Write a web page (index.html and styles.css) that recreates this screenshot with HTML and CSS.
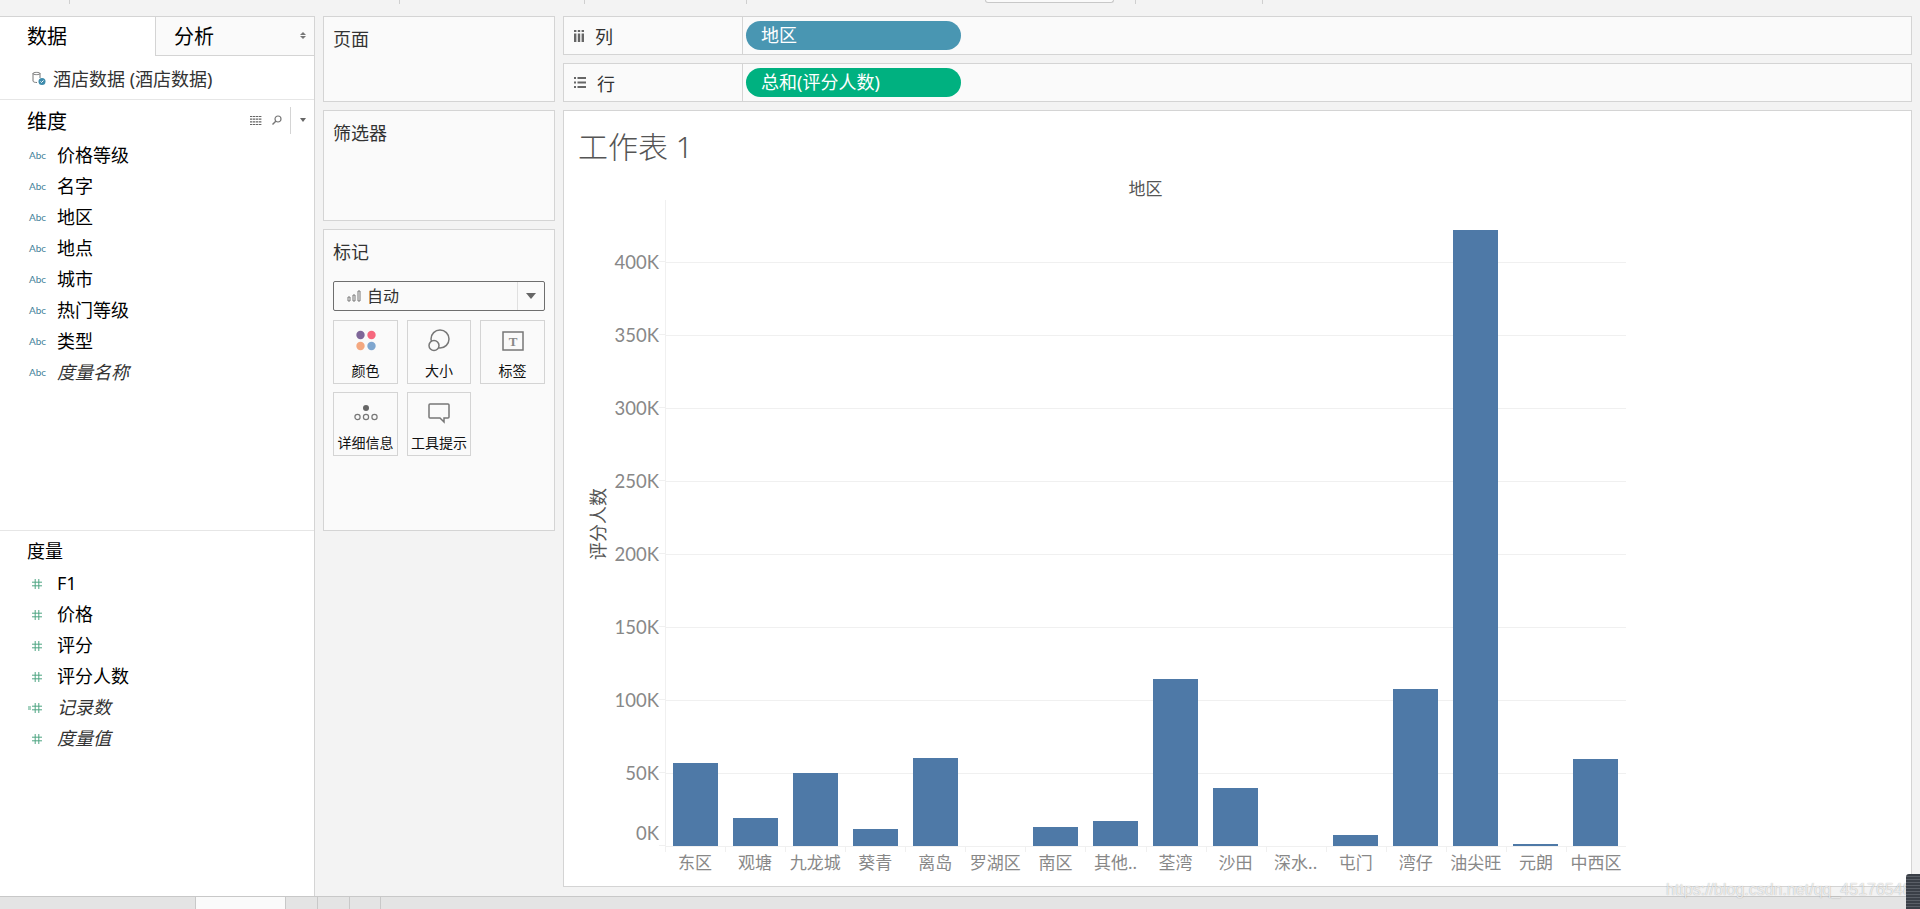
FILE: index.html
```html
<!DOCTYPE html>
<html lang="zh-CN">
	<head>
		<meta charset="UTF-8" />
		<title>工作表 1</title>
		<link rel="stylesheet" href="styles.css">
	</head>
	<body>
		<!-- bord bas de la barre d'outils -->
		<div class="toolbar">
			<span class="tool t1"></span>
			<span class="tool t2"></span>
			<span class="tool t3"></span>
			<span class="tool t4"></span>
			<span class="tool-gap"></span>
			<span class="tool-btn"></span>
			<span class="tool t5"></span>
			<span class="tool t6"></span>
		</div>

		<div class="workspace">
			<aside class="sidebar">
				<div class="tabs">
					<div class="tab tab-active">数据</div>
					<div class="tab tab-other">分析
						<span class="sort-arrows"><i class="arrow-up"></i><i class="arrow-down"></i></span>
					</div>
				</div>
				<div class="datasource">
					<svg class="db-icon" viewBox="0 0 14 14" width="14" height="14">
						<path d="M1 2.5C1 1 8 1 8 2.5V7M1 2.5C1 4 8 4 8 2.5M1 2.5V10C1 11 3 11.5 5 11.5" fill="none" stroke="#777" stroke-width="1" />
						<circle cx="10" cy="10.5" r="3.5" fill="#3f8cad" />
						<path d="M8.5 10.5l1 1 2-2" fill="none" stroke="#fff" stroke-width="1" />
					</svg>
					<span>酒店数据 (酒店数据)</span>
				</div>

				<section class="dimensions">
					<div class="section-head">
						<span>维度</span>
						<div class="section-tools">
							<svg viewBox="0 0 12 9" width="12" height="9">
								<path d="M0 .5h12M0 3.2h12M0 5.8h12M0 8.5h12" stroke="#666" stroke-width="1.2" stroke-dasharray="2.4 .6" />
							</svg>
							<svg class="search-icon" viewBox="0 0 10 10" width="10" height="10">
								<circle cx="6" cy="4" r="3" fill="none" stroke="#777" stroke-width="1.2" />
								<path d="M4 6L0.5 9.5" stroke="#777" stroke-width="1.4" />
							</svg>
							<i class="tools-sep"></i>
							<i class="caret caret-small"></i>
						</div>
					</div>
					<div class="field"><span class="abc">Abc</span>价格等级</div>
					<div class="field"><span class="abc">Abc</span>名字</div>
					<div class="field"><span class="abc">Abc</span>地区</div>
					<div class="field"><span class="abc">Abc</span>地点</div>
					<div class="field"><span class="abc">Abc</span>城市</div>
					<div class="field"><span class="abc">Abc</span>热门等级</div>
					<div class="field"><span class="abc">Abc</span>类型</div>
					<div class="field field-calc"><span class="abc">Abc</span>度量名称</div>
				</section>

				<section class="measures">
					<div class="section-head section-head-small"><span>度量</span></div>
					<div class="field"><svg class="hash" viewBox="0 0 14 10" width="14" height="10"><path d="M4 3.2h10M4 6.8h10M7.2 0v10M10.8 0v10" /></svg>F1</div>
					<div class="field"><svg class="hash" viewBox="0 0 14 10" width="14" height="10"><path d="M4 3.2h10M4 6.8h10M7.2 0v10M10.8 0v10" /></svg>价格</div>
					<div class="field"><svg class="hash" viewBox="0 0 14 10" width="14" height="10"><path d="M4 3.2h10M4 6.8h10M7.2 0v10M10.8 0v10" /></svg>评分</div>
					<div class="field"><svg class="hash" viewBox="0 0 14 10" width="14" height="10"><path d="M4 3.2h10M4 6.8h10M7.2 0v10M10.8 0v10" /></svg>评分人数</div>
					<div class="field field-calc"><svg class="hash" viewBox="0 0 14 10" width="14" height="10"><path d="M4 3.2h10M4 6.8h10M7.2 0v10M10.8 0v10M0 4h3M0 6h3" /></svg>记录数</div>
					<div class="field field-calc"><svg class="hash" viewBox="0 0 14 10" width="14" height="10"><path d="M4 3.2h10M4 6.8h10M7.2 0v10M10.8 0v10" /></svg>度量值</div>
				</section>
			</aside>

			<main class="main">
				<div class="card pages">页面</div>

				<div class="shelves">
					<div class="shelf">
						<div class="shelf-label">
							<svg viewBox="0 0 10 12" width="10" height="12" fill="#666">
								<path d="M0 0h2.4v2H0zM3.8 0h2.4v2H3.8zM7.6 0H10v2H7.6zM0 3.5h2.4V12H0zM3.8 3.5h2.4V12H3.8zM7.6 3.5H10V12H7.6z" />
							</svg>
							<span>列</span>
						</div>
						<div class="pill pill-blue">地区</div>
					</div>
					<div class="shelf">
						<div class="shelf-label">
							<svg viewBox="0 0 12 11" width="12" height="11" fill="#666">
								<path d="M0 0h2v2H0zM3.5 0H12v2H3.5zM0 4.5h2v2H0zM3.5 4.5H12v2H3.5zM0 9h2v2H0zM3.5 9H12v2H3.5z" />
							</svg>
							<span>行</span>
						</div>
						<div class="pill pill-green">总和(评分人数)</div>
					</div>
				</div>

				<div class="left-col">
					<div class="card filters">筛选器</div>
					<div class="card marks">
						<div>标记</div>
						<div class="mark-select">
							<svg viewBox="0 0 14 12" width="14" height="12">
								<path d="M1 7h2v4H1zM6 5h2v6H6zM11 1h2v10h-2z" fill="none" stroke="#777" stroke-width="1" />
							</svg>
							<span class="mark-select-text">自动</span>
							<span class="mark-select-btn"><i class="caret"></i></span>
						</div>
						<div class="mark-grid">
							<div class="mark-card">
								<svg viewBox="0 0 24 24" width="24" height="24">
									<circle cx="6.5" cy="6" r="4.2" fill="#7f6799" />
									<circle cx="17.5" cy="6" r="4.2" fill="#f6687e" />
									<circle cx="6.5" cy="17" r="4.2" fill="#f4a880" />
									<circle cx="17.5" cy="17" r="4.2" fill="#7fa6cf" />
								</svg>
								<span>颜色</span>
							</div>
							<div class="mark-card">
								<svg viewBox="0 0 24 24" width="24" height="24" fill="#fafafa" stroke="#777" stroke-width="1.5">
									<circle cx="13" cy="10" r="9" />
									<circle cx="7" cy="16.5" r="5" />
								</svg>
								<span>大小</span>
							</div>
							<div class="mark-card">
								<svg viewBox="0 0 24 24" width="24" height="24">
									<rect x="2" y="3" width="20" height="18" fill="none" stroke="#777" stroke-width="1.5" />
									<text x="12" y="16.5" class="t-glyph">T</text>
								</svg>
								<span>标签</span>
							</div>
							<div class="mark-card">
								<svg viewBox="0 0 24 24" width="24" height="24" fill="none" stroke="#777" stroke-width="1.2">
									<circle cx="12" cy="7" r="3" fill="#666" stroke="none" />
									<circle cx="3.5" cy="16" r="2.6" />
									<circle cx="12" cy="16" r="2.6" />
									<circle cx="20.5" cy="16" r="2.6" />
								</svg>
								<span>详细信息</span>
							</div>
							<div class="mark-card">
								<svg viewBox="0 0 24 24" width="24" height="24">
									<path d="M3 3h18a1 1 0 0 1 1 1v12a1 1 0 0 1-1 1h-4v4l-4-4H3a1 1 0 0 1-1-1V4a1 1 0 0 1 1-1z" fill="none" stroke="#777" stroke-width="1.5" />
								</svg>
								<span>工具提示</span>
							</div>
						</div>
					</div>
				</div>

				<div class="view">
					<h1 class="view-title">工作表 1</h1>
					<div class="chart">
						<div class="y-title"><span>评分人数</span></div>
						<div class="y-axis">
							<div class="y-label"><span>0K</span></div>
							<div class="y-label"><span>50K</span></div>
							<div class="y-label"><span>100K</span></div>
							<div class="y-label"><span>150K</span></div>
							<div class="y-label"><span>200K</span></div>
							<div class="y-label"><span>250K</span></div>
							<div class="y-label"><span>300K</span></div>
							<div class="y-label"><span>350K</span></div>
							<div class="y-label"><span>400K</span></div>
						</div>
						<div class="plot-col">
							<div class="x-title">地区</div>
							<div class="plot">
								<div class="band"><div class="bar" style="height:83px"></div></div>
								<div class="band"><div class="bar" style="height:28px"></div></div>
								<div class="band"><div class="bar" style="height:73px"></div></div>
								<div class="band"><div class="bar" style="height:17px"></div></div>
								<div class="band"><div class="bar" style="height:88px"></div></div>
								<div class="band"><div class="bar" style="height:0"></div></div>
								<div class="band"><div class="bar" style="height:19px"></div></div>
								<div class="band"><div class="bar" style="height:25px"></div></div>
								<div class="band"><div class="bar" style="height:167px"></div></div>
								<div class="band"><div class="bar" style="height:58px"></div></div>
								<div class="band"><div class="bar" style="height:0"></div></div>
								<div class="band"><div class="bar" style="height:11px"></div></div>
								<div class="band"><div class="bar" style="height:157px"></div></div>
								<div class="band"><div class="bar" style="height:616px"></div></div>
								<div class="band"><div class="bar" style="height:2px"></div></div>
								<div class="band"><div class="bar" style="height:87px"></div></div>
							</div>
							<div class="x-labels">
								<span>东区</span>
								<span>观塘</span>
								<span>九龙城</span>
								<span>葵青</span>
								<span>离岛</span>
								<span>罗湖区</span>
								<span>南区</span>
								<span>其他..</span>
								<span>荃湾</span>
								<span>沙田</span>
								<span>深水..</span>
								<span>屯门</span>
								<span>湾仔</span>
								<span>油尖旺</span>
								<span>元朗</span>
								<span>中西区</span>
							</div>
						</div>
					</div>
				</div>
			</main>
		</div>

		<!-- onglets du bas -->
		<div class="sheet-bar">
			<span class="sheet-spacer"></span>
			<span class="sheet sheet-active"></span>
			<span class="sheet"></span>
			<span class="sheet"></span>
			<span class="sheet"></span>
		</div>

		<div class="watermark">https://blog.csdn.net/qq_45176548</div>
		<div class="corner-handle"></div>
	</body>
</html>
```

FILE: styles.css
```css
* {
	box-sizing: border-box;
}

body {
	margin: 0;
	height: 909px;
	overflow: hidden;
	display: flex;
	flex-direction: column;
	position: relative;
	background: #f3f3f3;
	color: #000;
	font-family: "Noto Sans", "Noto Sans CJK SC", sans-serif;
	font-size: 18px;
}

/*TOOLBAR*/
.toolbar {
	height: 16px;
	display: flex;
	align-items: flex-start;
	flex: none;
}

.tool {
	height: 4px;
	border-right: 1px solid #cfcfcf;
}

.t1 { width: 70px; }
.t2 { width: 330px; }
.t3 { width: 185px; }
.t4 { width: 162px; }
.t5 { width: 22px; }
.t6 { width: 127px; }

.tool-gap {
	width: 238px;
}

.tool-btn {
	width: 129px;
	height: 3px;
	background: #fafafa;
	border: 1px solid #c8c8c8;
	border-top: none;
	border-radius: 0 0 3px 3px;
}

.workspace {
	flex: 1;
	display: flex;
	min-height: 0;
}

/*SIDEBAR*/
.sidebar {
	width: 315px;
	flex: none;
	background: #fff;
	border-top: 1px solid #d4d4d4;
	border-right: 1px solid #d4d4d4;
	display: flex;
	flex-direction: column;
}

.tabs {
	height: 39px;
	flex: none;
	display: flex;
	font-size: 20px;
	line-height: 40px;
}

.tab-active {
	width: 155px;
	padding-left: 27px;
}

.tab-other {
	flex: 1;
	padding-left: 18px;
	background: #fafafa;
	border-left: 1px solid #d4d4d4;
	border-bottom: 1px solid #d4d4d4;
	position: relative;
}

.sort-arrows {
	position: absolute;
	right: 8px;
	top: 15px;
	display: flex;
	flex-direction: column;
	gap: 1px;
}

.arrow-up,
.arrow-down {
	display: block;
	border-left: 3px solid transparent;
	border-right: 3px solid transparent;
}

.arrow-up {
	border-bottom: 3px solid #777;
}

.arrow-down {
	border-top: 3px solid #777;
}

.datasource {
	height: 44px;
	flex: none;
	display: flex;
	align-items: center;
	padding-left: 32px;
	color: #333;
	border-bottom: 1px solid #e6e6e6;
}

.db-icon {
	margin-right: 7px;
}

.dimensions {
	height: 431px;
	flex: none;
	border-bottom: 1px solid #e6e6e6;
}

.section-head {
	height: 40px;
	display: flex;
	align-items: center;
	justify-content: space-between;
	padding-left: 27px;
	font-size: 20px;
}

.section-head-small {
	height: 37px;
	font-size: 18px;
}

.section-tools {
	display: flex;
	align-items: center;
	margin-right: 8px;
}

.search-icon {
	margin-left: 10px;
}

.tools-sep {
	width: 1px;
	height: 27px;
	margin: 0 9px 0 8px;
	background: #d4d4d4;
}

.caret {
	display: block;
	border-left: 5px solid transparent;
	border-right: 5px solid transparent;
	border-top: 6px solid #666;
}

.caret-small {
	border-left-width: 3.5px;
	border-right-width: 3.5px;
	border-top-width: 4px;
}

.field {
	height: 31px;
	display: flex;
	align-items: center;
	line-height: 31px;
	white-space: nowrap;
}

.field-calc {
	font-style: italic;
	color: #333;
}

.abc {
	width: 57px;
	padding-left: 29px;
	flex: none;
	font-family: Lato, sans-serif;
	font-style: normal;
	font-size: 10px;
	color: #3f7f99;
}

.hash {
	margin-left: 28px;
	margin-right: 15px;
	flex: none;
	fill: none;
	stroke: #4fa683;
	stroke-width: 1;
}

/*PANNEAUX CENTRE*/
.main {
	flex: 1;
	min-width: 0;
	display: grid;
	grid-template-columns: 232px 1fr;
	grid-template-rows: 86px 1fr;
	gap: 8px;
	padding: 0 8px 9px;
}

.card {
	background: #fafafa;
	border: 1px solid #d4d4d4;
	padding: 9px;
	color: #333;
	line-height: 26px;
}

.left-col {
	display: flex;
	flex-direction: column;
	gap: 8px;
}

.filters {
	height: 111px;
}

.marks {
	height: 302px;
}

.mark-select {
	height: 30px;
	width: 212px;
	margin-top: 16px;
	display: flex;
	align-items: center;
	padding-left: 13px;
	background: #fafafa;
	border: 1px solid #6e6e6e;
	border-radius: 2px;
	color: #333;
}

.mark-select-text {
	margin-left: 6px;
	font-size: 16px;
	flex: 1;
}

.mark-select-btn {
	width: 27px;
	height: 100%;
	display: flex;
	align-items: center;
	justify-content: center;
	border-left: 1px solid #e0e0e0;
}

.mark-grid {
	margin-top: 9px;
	display: grid;
	grid-template-columns: 65px 64px 65px;
	grid-auto-rows: 64px;
	gap: 8px 9px;
	width: 212px;
}

.mark-card {
	border: 1px solid #d4d4d4;
	display: flex;
	flex-direction: column;
	align-items: center;
	padding-top: 8px;
	font-size: 14px;
	line-height: 18px;
	color: #111;
	white-space: nowrap;
}

.mark-card span {
	margin-top: 9px;
}

.t-glyph {
	font-family: "Liberation Serif", serif;
	font-size: 13px;
	font-weight: bold;
	fill: #888;
	text-anchor: middle;
}

/*ETAGERES*/
.shelves {
	display: flex;
	flex-direction: column;
	gap: 8px;
}

.shelf {
	height: 39px;
	display: flex;
	align-items: center;
	background: #fafafa;
	border: 1px solid #d4d4d4;
}

.shelf-label {
	width: 179px;
	height: 100%;
	display: flex;
	align-items: center;
	padding-left: 10px;
	border-right: 1px solid #d4d4d4;
	color: #333;
}

.shelf-label span {
	margin-left: 11px;
}

.pill {
	width: 215px;
	height: 29px;
	margin-left: 3px;
	padding-left: 15px;
	border-radius: 15px;
	color: #fff;
	line-height: 28px;
}

.pill-blue {
	background: #4996b2;
}

.pill-green {
	background: #00b180;
}

/*VUE*/
.view {
	background: #fff;
	border: 1px solid #d4d4d4;
}

.view-title {
	margin: 16px 0 0 14px;
	height: 40px;
	font-size: 30px;
	font-weight: 300;
	line-height: 40px;
	color: #555;
}

.chart {
	display: flex;
	margin-top: 11px;
}

.y-title {
	width: 20px;
	height: 647px;
	margin: 22px 0 0 23px;
	display: flex;
	align-items: center;
	justify-content: center;
	font-size: 18px;
	color: #555;
}

.y-title span {
	writing-mode: vertical-rl;
	text-orientation: sideways;
	transform: rotate(180deg);
}

.y-axis {
	width: 58px;
	height: 647px;
	margin-top: 22px;
	display: flex;
	flex-direction: column-reverse;
	font-family: Lato, sans-serif;
	font-size: 18.5px;
	color: #888;
}

.y-label {
	height: 73px;
	flex: none;
	padding-bottom: 1px;
	display: flex;
	align-items: flex-end;
	justify-content: flex-end;
	line-height: 0;
}

/* le 0K est remonte au dessus de l'axe */
.y-label:first-child span {
	transform: translateY(-13px);
}

.y-label::after {
	content: "";
	width: 6px;
	height: 1px;
	background: #f0f0f0;
}

.plot-col {
	width: 961px;
}

.x-title {
	height: 22px;
	line-height: 22px;
	text-align: center;
	font-size: 17px;
	color: #555;
}

.plot {
	height: 647px;
	display: flex;
	padding-bottom: 1px;
	background:
		linear-gradient(#f0f0f0, #f0f0f0) left top / 1px 100% no-repeat,
		repeating-linear-gradient(to top, #f0f0f0 0, #f0f0f0 1px, transparent 1px, transparent 73px);
}

.band {
	flex: 1;
	display: flex;
	align-items: flex-end;
	justify-content: center;
}

.bar {
	width: 45px;
	background: #4e79a7;
}

.x-labels {
	display: flex;
	font-size: 17px;
	color: #888;
}

.x-labels span {
	flex: 1;
	line-height: 32px;
	text-align: center;
	white-space: nowrap;
	background: linear-gradient(#f0f0f0, #f0f0f0) left top / 1px 5px no-repeat;
}

/*ONGLETS BAS*/
.sheet-bar {
	height: 13px;
	flex: none;
	display: flex;
	background: #e4e4e4;
	border-top: 1px solid #c8c8c8;
}

.sheet-spacer {
	width: 195px;
}

.sheet {
	width: 32px;
	border-left: 1px solid #c8c8c8;
}

.sheet:last-child {
	border-right: 1px solid #c8c8c8;
}

.sheet-active {
	width: 90px;
	background: #fafafa;
}

/* filigrane et poignee par dessus la page */
.watermark {
	position: absolute;
	left: 1666px;
	top: 879px;
	font-family: "Liberation Sans", sans-serif;
	font-size: 16px;
	line-height: 22px;
	color: rgba(255, 255, 255, 0.75);
	text-shadow: 0 0 1px rgba(0, 0, 0, 0.35);
	white-space: nowrap;
}

.corner-handle {
	position: absolute;
	right: 0;
	bottom: 0;
	width: 14px;
	height: 35px;
	border-radius: 3px 0 0 0;
	background: repeating-linear-gradient(to bottom, #3a3f47 0, #3a3f47 2px, #5a5f67 2px, #5a5f67 3px);
}
```
